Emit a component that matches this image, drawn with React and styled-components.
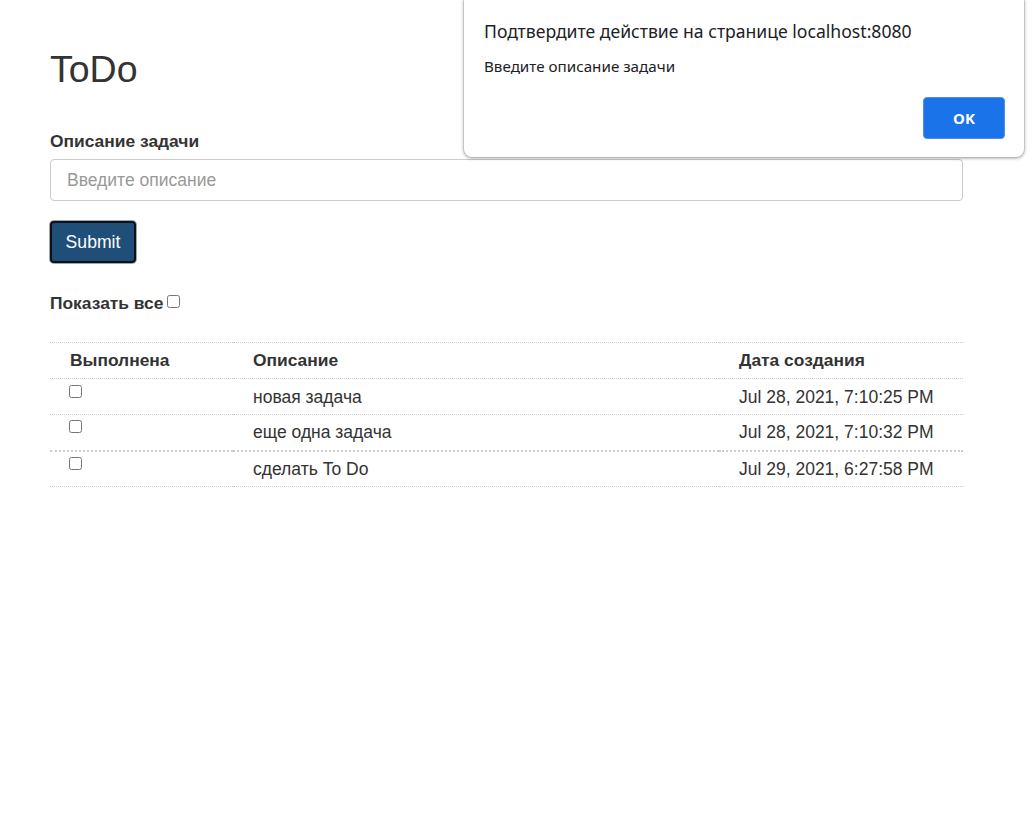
import React from "react";
import styled, { createGlobalStyle } from "styled-components";

const Global = createGlobalStyle`
  html, body { margin: 0; padding: 0; background: #fff; }
  body { font-family: "Liberation Sans", Arial, sans-serif; color: #333; font-size: 17.5px; }
  * { box-sizing: border-box; }
`;

const Page = styled.div`
  padding: 46px 70px 0 50px;
  width: 1032px;
  min-height: 820px;
`;

const Title = styled.h1`
  margin: 0 0 39px;
  font-size: 37.5px;
  font-weight: 400;
  line-height: 46px;
  color: #333;
`;

const Label = styled.label`
  display: block;
  font-weight: 700;
  font-size: 17.4px;
  line-height: 20px;
  margin-bottom: 8px;
  color: #333;
`;

const Input = styled.input`
  display: block;
  width: 913px;
  height: 42px;
  padding: 0 16px;
  border: 1px solid #ccc;
  border-radius: 4px;
  font-family: "Liberation Sans", Arial, sans-serif;
  font-size: 17.5px;
  color: #333;
  &::placeholder { color: #999; }
`;

const SubmitButton = styled.button`
  margin-top: 20px;
  height: 42px;
  width: 86px;
  padding: 0;
  background: #1f4e79;
  color: #fff;
  border: 2px solid #111;
  border-radius: 4px;
  box-shadow: 0 0 0 1px #97a6b8;
  font-family: "Liberation Sans", Arial, sans-serif;
  font-size: 17.6px;
`;

const ShowAll = styled.label`
  display: flex;
  align-items: center;
  gap: 4px;
  margin-top: 30px;
  font-weight: 700;
  font-size: 17.4px;
  line-height: 20px;
  color: #333;
`;

const Box = styled.input.attrs({ type: "checkbox" })`
  width: 13px;
  height: 13px;
  margin: 0;
  position: relative;
  top: ${(p) => p.$top || 0}px;
`;

const Table = styled.table`
  margin-top: 29px;
  width: 913px;
  border-collapse: collapse;
  font-size: 17.5px;
`;

const Th = styled.th`
  text-align: left;
  font-weight: 700;
  font-size: 17.4px;
  height: 36px;
  padding: 0 0 0 ${(p) => p.$pl}px;
  border-top: 1px dotted #ccc;
  border-bottom: 1px dotted #ccc;
  color: #333;
`;

const Td = styled.td`
  height: 36px;
  padding: 0 0 0 ${(p) => p.$pl}px;
  border-bottom: ${(p) => (p.$thick ? "2px" : "1px")} dotted #ccc;
  color: #333;
  vertical-align: middle;
  line-height: 20px;
`;

const BoxCell = styled.div`
  display: flex;
  align-items: flex-start;
  height: 20px;
  margin-top: -4px;
`;

const Dialog = styled.div`
  position: absolute;
  top: 0;
  left: 464px;
  width: 560px;
  height: 157px;
  background: #fff;
  border-radius: 0 0 8px 8px;
  box-shadow: 0 1px 3px 1px rgba(0, 0, 0, 0.25), 0 0 0 1px rgba(0, 0, 0, 0.08);
  padding: 20px 19px 0 20px;
  font-family: "Noto Sans", "Open Sans", sans-serif;
  color: #202124;
  display: flex;
  flex-direction: column;
`;

const DialogTitle = styled.div`
  font-size: 17.6px;
  line-height: 22px;
`;

const DialogMsg = styled.div`
  margin-top: 15px;
  font-size: 15.2px;
  line-height: 18px;
`;

const DialogFooter = styled.div`
  display: flex;
  justify-content: flex-end;
  margin-top: 22px;
`;

const OkButton = styled.button`
  width: 82px;
  height: 42px;
  background: #1a73e8;
  border: 1px solid #4d8ff0;
  border-radius: 4px;
  color: #fff;
  font-family: "Noto Sans", "Open Sans", sans-serif;
  font-weight: 700;
  font-size: 15px;
`;

const rows = [
  ["новая задача", "Jul 28, 2021, 7:10:25 PM"],
  ["еще одна задача", "Jul 28, 2021, 7:10:32 PM"],
  ["сделать To Do", "Jul 29, 2021, 6:27:58 PM"],
];

export default function App() {
  return (
    <>
      <Global />
      <Page>
        <Title>ToDo</Title>
        <Label>Описание задачи</Label>
        <Input placeholder="Введите описание" />
        <SubmitButton>Submit</SubmitButton>
        <ShowAll>
          Показать все <Box $top={-2} />
        </ShowAll>
        <Table>
          <thead>
            <tr>
              <Th $pl={20} style={{ width: 183 }}>Выполнена</Th>
              <Th $pl={20}>Описание</Th>
              <Th $pl={20} style={{ width: 244 }}>Дата создания</Th>
            </tr>
          </thead>
          <tbody>
            {rows.map((r, i) => (
              <tr key={i}>
                <Td $pl={19} $thick={i === 1}>
                  <BoxCell><Box /></BoxCell>
                </Td>
                <Td $pl={20} $thick={i === 1}>{r[0]}</Td>
                <Td $pl={20} $thick={i === 1}>{r[1]}</Td>
              </tr>
            ))}
          </tbody>
        </Table>
      </Page>
      <Dialog>
        <DialogTitle>Подтвердите действие на странице localhost:8080</DialogTitle>
        <DialogMsg>Введите описание задачи</DialogMsg>
        <DialogFooter>
          <OkButton>OK</OkButton>
        </DialogFooter>
      </Dialog>
    </>
  );
}
